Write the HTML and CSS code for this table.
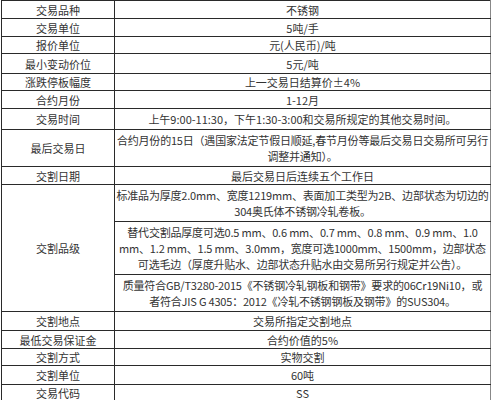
FILE: index.html
```html
<!DOCTYPE html>
<html lang="zh-CN">
<head>
<meta charset="utf-8">
<link rel="stylesheet" href="styles.css">
</head>
<body>
<table class="spec">
  <colgroup><col class="c1"><col class="c2"></colgroup>
  <tr class="h18"><td>交易品种</td><td>不锈钢</td></tr>
  <tr class="h18"><td>交易单位</td><td>5吨/手</td></tr>
  <tr class="h16 gb"><td>报价单位</td><td>元(人民币)/吨</td></tr>
  <tr class="h20"><td>最小变动价位</td><td>5元/吨</td></tr>
  <tr class="h16 gb"><td>涨跌停板幅度</td><td>上一交易日结算价±4%</td></tr>
  <tr class="h18 gb"><td>合约月份</td><td>1-12月</td></tr>
  <tr class="h21"><td>交易时间</td><td>上午9:00-11:30，下午1:30-3:00和交易所规定的其他交易时间。</td></tr>
  <tr class="h37 gb"><td>最后交易日</td><td class="tight">合约月份的15日（遇国家法定节假日顺延,春节月份等最后交易日交易所可另行<br>调整并通知）。</td></tr>
  <tr class="h18"><td>交割日期</td><td>最后交易日后连续五个工作日</td></tr>
  <tr class="h37"><td rowspan="3">交割品级</td><td class="tight">标准品为厚度2.0mm、宽度1219mm、表面加工类型为2B、边部状态为切边的<br>304奥氏体不锈钢冷轧卷板。</td></tr>
  <tr class="h53"><td class="tight">替代交割品厚度可选0.5 mm、0.6 mm、0.7 mm、0.8 mm、0.9 mm、1.0<br>mm、1.2 mm、1.5 mm、3.0mm，宽度可选1000mm、1500mm，边部状态<br>可选毛边（厚度升贴水、边部状态升贴水由交易所另行规定并公告）。</td></tr>
  <tr class="h37"><td class="tight">质量符合GB/T3280-2015《不锈钢冷轧钢板和钢带》要求的06Cr19Ni10，或<br>者符合JIS G 4305：2012《冷轧不锈钢钢板及钢带》的SUS304。</td></tr>
  <tr class="h19"><td>交割地点</td><td>交易所指定交割地点</td></tr>
  <tr class="h18"><td>最低交易保证金</td><td>合约价值的5%</td></tr>
  <tr class="h17"><td>交割方式</td><td>实物交割</td></tr>
  <tr class="h19"><td>交割单位</td><td>60吨</td></tr>
  <tr class="h16"><td>交易代码</td><td>SS</td></tr>
</table>
</body>
</html>
```
FILE: styles.css
```css
html, body {
  margin: 0;
  padding: 0;
  background: #fff;
}
.spec {
  border-collapse: collapse;
  table-layout: fixed;
  width: 489px;
  margin-left: 1px;
  font-family: "Noto Sans CJK SC", "Noto Sans", sans-serif;
  font-size: 11px;
  line-height: 16px;
  color: #333;
}
.c1 { width: 113px; }
.c2 { width: 376px; }
.spec td {
  border: 1px solid #2a2a2a;
  padding: 0;
  text-align: center;
  vertical-align: middle;
  white-space: nowrap;
  overflow: hidden;
}
.spec td.tight { letter-spacing: -0.2px; }
.spec td:last-child { border-right-color: #888; }
.spec tr.gb td { border-top-color: #8a8a8a; }
.h16 td { height: 15px; }
.h17 td { height: 16px; }
.h18 td { height: 17px; }
.h19 td { height: 18px; }
.h20 td { height: 19px; }
.h21 td { height: 20px; }
.h37 td { height: 36px; }
.h53 td { height: 52px; }
```
